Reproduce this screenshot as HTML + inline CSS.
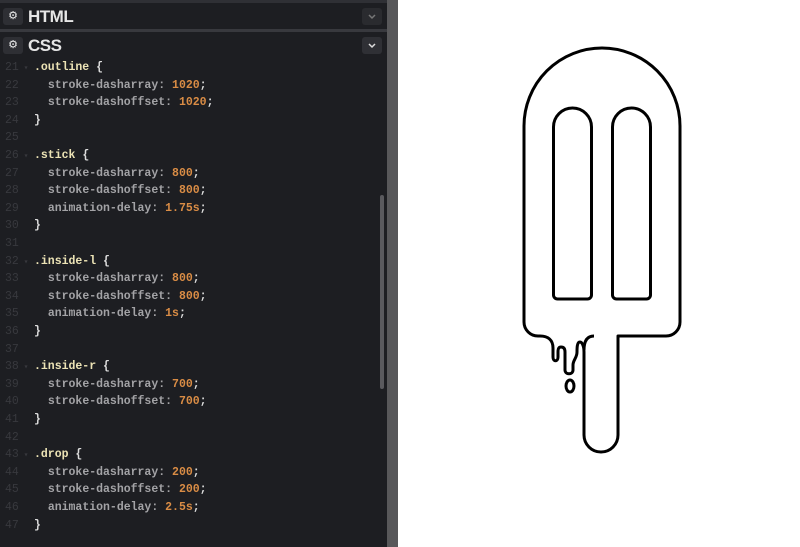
<!DOCTYPE html>
<html><head><style>
body{margin:0;width:800px;height:547px;overflow:hidden;background:#fff;position:relative;font-family:"Liberation Sans",sans-serif}
#ed{position:absolute;left:0;top:0;width:387px;height:547px;background:#1d1e22}
#div{position:absolute;left:387px;top:0;width:11px;height:547px;background:#58585a}
.bar{position:absolute;left:0;width:387px;height:28px;background:#1d1e22;}
.gear{position:absolute;left:3px;top:5px;width:20px;height:17px;background:#2e2f34;border-radius:3px;color:#eee;font-size:11px;text-align:center;line-height:17px}
.title{position:absolute;left:28px;top:4px;color:#e6e6e6;font-weight:bold;font-size:17px;letter-spacing:-0.5px}
.chev{position:absolute;left:362px;top:5px;width:20px;height:17px;background:#2f3035;border-radius:3px}
.code{position:absolute;left:0;top:0;font-family:"Liberation Mono",monospace;font-size:11.5px;font-weight:bold;white-space:pre;color:#aaa}
.l{position:absolute;height:18px;line-height:18px}
.n{color:#38393e;left:5px;width:30px;font-weight:normal}
.s{color:#ece3b5}.p{color:#a3a3a6}.o{color:#d98c45}.w{color:#ddd}
</style></head><body>
<div id="ed">
<div style="position:absolute;left:0;top:0;width:387px;height:3px;background:#2f3035"></div>
<div class="bar" style="top:3px"><div class="gear">⚙</div><div class="title">HTML</div><div class="chev" style="background:#2a2b2f"><svg width="20" height="17"><path d="M7 7l3 3 3-3" stroke="#777" stroke-width="1.5" fill="none"/></svg></div></div>
<div style="position:absolute;left:0;top:29px;width:387px;height:3px;background:#38393e"></div>
<div class="bar" style="top:32px"><div class="gear">⚙</div><div class="title">CSS</div><div class="chev"><svg width="20" height="17"><path d="M7 7l3 3 3-3" stroke="#ddd" stroke-width="1.5" fill="none"/></svg></div></div>
<div style="position:absolute;left:380px;top:195px;width:4px;height:194px;background:#5a5a5e;border-radius:2px"></div>
<div class="code" id="c"></div>
</div>
<div id="div"></div>
<svg style="position:absolute;left:0;top:0" width="800" height="547">
<g fill="none" stroke="#000" stroke-width="3" stroke-linejoin="round">
<path d="M602 48 A78 78 0 0 1 680 126 V322 A14 14 0 0 1 666 336 H618 V435 A17 17 0 0 1 584 435 V352 C584 346 582 342 580 342 C577 342 577 348 577 352 C577 358 573 360 573 365 V370 C573 375 565 375 565 370 V352 C565 348 563 347 561 347 C558 347 558 350 558 352 V357 C558 362 553 362 553 357 V348 C553 340 548 336 540 336 H538 A14 14 0 0 1 524 322 V126 A78 78 0 0 1 602 48 Z"/>
<path d="M584 350 C584 341 587 336 594 336"/>
<path d="M553.5 127 V295 A4 4 0 0 0 557.5 299 H587.5 A4 4 0 0 0 591.5 295 V127 A19 19 0 0 0 553.5 127Z"/>
<path d="M612.5 127 V295 A4 4 0 0 0 616.5 299 H646.5 A4 4 0 0 0 650.5 295 V127 A19 19 0 0 0 612.5 127Z"/>
<ellipse cx="570" cy="386" rx="4" ry="6"/>
</g>
</svg>
<script>
var L=[
[21,'<span class="s">.outline</span> <span class="w">{</span>'],
[22,'  <span class="p">stroke-dasharray:</span> <span class="o">1020</span><span class="w">;</span>'],
[23,'  <span class="p">stroke-dashoffset:</span> <span class="o">1020</span><span class="w">;</span>'],
[24,'<span class="w">}</span>'],[25,''],
[26,'<span class="s">.stick</span> <span class="w">{</span>'],
[27,'  <span class="p">stroke-dasharray:</span> <span class="o">800</span><span class="w">;</span>'],
[28,'  <span class="p">stroke-dashoffset:</span> <span class="o">800</span><span class="w">;</span>'],
[29,'  <span class="p">animation-delay:</span> <span class="o">1.75s</span><span class="w">;</span>'],
[30,'<span class="w">}</span>'],[31,''],
[32,'<span class="s">.inside-l</span> <span class="w">{</span>'],
[33,'  <span class="p">stroke-dasharray:</span> <span class="o">800</span><span class="w">;</span>'],
[34,'  <span class="p">stroke-dashoffset:</span> <span class="o">800</span><span class="w">;</span>'],
[35,'  <span class="p">animation-delay:</span> <span class="o">1s</span><span class="w">;</span>'],
[36,'<span class="w">}</span>'],[37,''],
[38,'<span class="s">.inside-r</span> <span class="w">{</span>'],
[39,'  <span class="p">stroke-dasharray:</span> <span class="o">700</span><span class="w">;</span>'],
[40,'  <span class="p">stroke-dashoffset:</span> <span class="o">700</span><span class="w">;</span>'],
[41,'<span class="w">}</span>'],[42,''],
[43,'<span class="s">.drop</span> <span class="w">{</span>'],
[44,'  <span class="p">stroke-dasharray:</span> <span class="o">200</span><span class="w">;</span>'],
[45,'  <span class="p">stroke-dashoffset:</span> <span class="o">200</span><span class="w">;</span>'],
[46,'  <span class="p">animation-delay:</span> <span class="o">2.5s</span><span class="w">;</span>'],
[47,'<span class="w">}</span>']];
var folds={21:1,26:1,32:1,38:1,43:1};
var h='';L.forEach(function(a){var t=59+(a[0]-21)*17.6;h+='<div class="l n" style="top:'+t+'px">'+a[0]+(folds[a[0]]?'<span style="font-size:8px"> ▾</span>':'')+'</div><div class="l" style="left:34px;top:'+t+'px">'+a[1]+'</div>';});
document.getElementById('c').innerHTML=h;
</script>
</body></html>
